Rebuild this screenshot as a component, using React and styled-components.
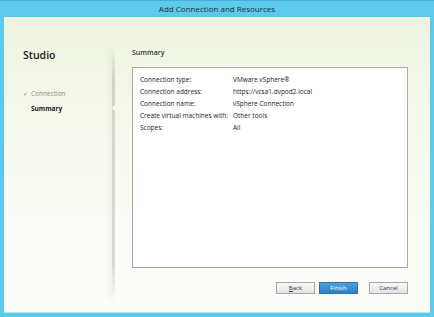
import styled, { createGlobalStyle } from "styled-components";

const GlobalStyle = createGlobalStyle`
  html, body {
    margin: 0;
    padding: 0;
    background: #ffffff;
  }
  body {
    font-family: "Open Sans", "Noto Sans", sans-serif;
  }
`;

const rows = [
  { label: "Connection type:", value: "VMware vSphere®" },
  { label: "Connection address:", value: "https://vcsa1.dvpod2.local" },
  { label: "Connection name:", value: "vSphere Connection" },
  { label: "Create virtual machines with:", value: "Other tools" },
  { label: "Scopes:", value: "All" },
];

const App = () => {
  return (
    <>
      <GlobalStyle />
      <Window>
        <TitleBar>Add Connection and Resources</TitleBar>
        <Body>
          <Sidebar>
            <Brand>Studio</Brand>
            <Steps>
              <Step done>
                <Check>✓</Check>Connection
              </Step>
              <Step current>Summary</Step>
            </Steps>
          </Sidebar>
          <Divider>
            <Marker />
          </Divider>
          <Main>
            <Heading>Summary</Heading>
            <SummaryBox>
              {rows.map((row) => (
                <Row key={row.label}>
                  <Label>{row.label}</Label>
                  <Value>{row.value}</Value>
                </Row>
              ))}
            </SummaryBox>
            <Buttons>
              <Button>
                <u>B</u>ack
              </Button>
              <Button primary>Finish</Button>
              <Button gap>Cancel</Button>
            </Buttons>
          </Main>
        </Body>
      </Window>
    </>
  );
};

//Styling

const Window = styled.div`
  width: 434px;
  height: 317px;
  box-sizing: border-box;
  display: flex;
  flex-direction: column;
  background: #5ccaea;
  border-top: 1px solid #3fb2d6;
  padding: 0 4px 4px 4px;
`;

const TitleBar = styled.div`
  height: 16px;
  line-height: 16px;
  text-align: center;
  font-size: 8px;
  color: #1e2e3a;
`;

const Body = styled.div`
  flex: 1;
  display: flex;
  background: linear-gradient(to bottom, #edf3df 0%, #f5f9ec 35%, #fbfdf7 75%, #fcfdf8 100%);
  border-bottom: 1px solid #b9e4f0;
`;

const Sidebar = styled.div`
  width: 108px;
  padding: 30px 0 0 19px;
  box-sizing: border-box;
`;

const Brand = styled.div`
  font-size: 10.5px;
  font-weight: 600;
  color: #222;
  height: 16px;
  line-height: 16px;
`;

const Steps = styled.div`
  margin-top: 26px;
  display: flex;
  flex-direction: column;
  gap: 5px;
`;

const Step = styled.div`
  font-size: 6.5px;
  line-height: 9px;
  color: ${(p) => (p.done ? "#8a8a8a" : "#1a1a1a")};
  font-weight: ${(p) => (p.current ? 700 : 400)};
  padding-left: ${(p) => (p.current ? "8px" : "0")};
`;

const Check = styled.span`
  display: inline-block;
  width: 8px;
  color: #777;
  font-size: 6px;
`;

const Divider = styled.div`
  position: relative;
  width: 3px;
  margin: 30px 0 10px;
  background: linear-gradient(
    to bottom,
    rgba(0, 0, 0, 0),
    rgba(0, 0, 0, 0.14) 12%,
    rgba(0, 0, 0, 0.14) 85%,
    rgba(0, 0, 0, 0)
  );
  box-shadow: -3px 0 5px rgba(0, 0, 0, 0.06);
`;

const Marker = styled.div`
  position: absolute;
  left: 0;
  top: 58px;
  width: 0;
  height: 0;
  border-top: 3px solid transparent;
  border-bottom: 3px solid transparent;
  border-right: 3px solid #ffffff;
`;

const Main = styled.div`
  flex: 1;
  display: flex;
  flex-direction: column;
  padding: 30px 22px 0 17px;
`;

const Heading = styled.div`
  font-size: 7px;
  font-weight: 600;
  color: #333;
  height: 12px;
  line-height: 12px;
`;

const SummaryBox = styled.div`
  margin-top: 8px;
  height: 201px;
  box-sizing: border-box;
  background: #ffffff;
  border: 1px solid #a9a9a9;
  padding: 6px 0 0 7px;
`;

const Row = styled.div`
  display: flex;
  height: 12px;
  line-height: 12px;
  font-size: 6.5px;
  color: #222;
`;

const Label = styled.div`
  width: 93px;
`;

const Value = styled.div``;

const Buttons = styled.div`
  display: flex;
  justify-content: flex-end;
  margin-top: 14px;
  gap: 4px;
`;

const Button = styled.div`
  width: 39px;
  height: 12px;
  box-sizing: border-box;
  margin-left: ${(p) => (p.gap ? "7px" : "0")};
  font-size: 6px;
  line-height: 10px;
  text-align: center;
  color: ${(p) => (p.primary ? "#ffffff" : "#333")};
  border: 1px solid ${(p) => (p.primary ? "#2a73b0" : "#a8a8a8")};
  background: ${(p) =>
    p.primary
      ? "linear-gradient(to bottom, #4aa0dc, #2e80c4)"
      : "linear-gradient(to bottom, #f7f7f7, #e4e4e4)"};
`;

export default App;
